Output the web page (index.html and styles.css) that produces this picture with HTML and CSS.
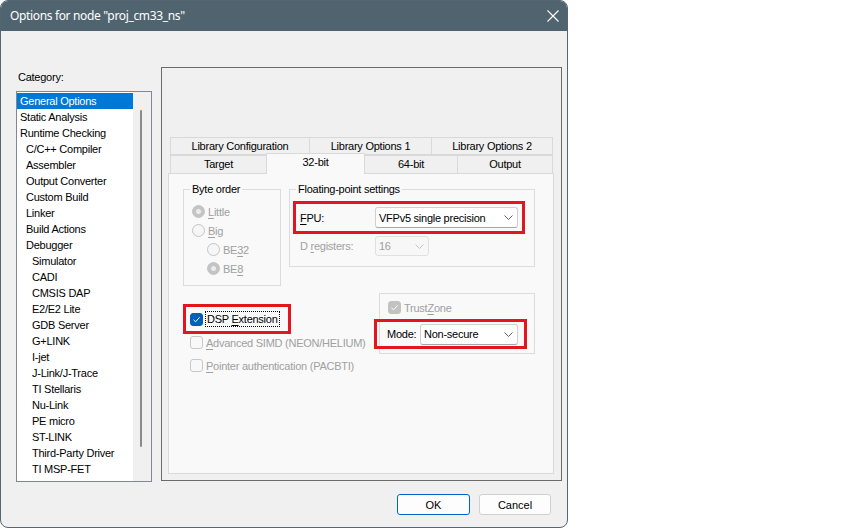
FILE: index.html
```html
<!DOCTYPE html>
<html>
<head>
<meta charset="utf-8">
<link rel="stylesheet" href="styles.css">
</head>
<body>
<div class="dialog">
  <div class="titlebar">
    <span class="title">Options for node "proj_cm33_ns"</span>
    <svg class="close" width="12" height="12" viewBox="0 0 12 12"><path d="M0.5 0.5 L11.5 11.5 M11.5 0.5 L0.5 11.5" stroke="#ffffff" stroke-width="1.1" fill="none"/></svg>
  </div>
  <div class="main">
    <div class="left">
      <div class="cat-label">Category:</div>
      <div class="list">
        <div class="items">
          <div class="item sel">General Options</div>
          <div class="item">Static Analysis</div>
          <div class="item">Runtime Checking</div>
          <div class="item l1">C/C++ Compiler</div>
          <div class="item l1">Assembler</div>
          <div class="item l1">Output Converter</div>
          <div class="item l1">Custom Build</div>
          <div class="item l1">Linker</div>
          <div class="item l1">Build Actions</div>
          <div class="item l1">Debugger</div>
          <div class="item l2">Simulator</div>
          <div class="item l2">CADI</div>
          <div class="item l2">CMSIS DAP</div>
          <div class="item l2">E2/E2 Lite</div>
          <div class="item l2">GDB Server</div>
          <div class="item l2">G+LINK</div>
          <div class="item l2">I-jet</div>
          <div class="item l2">J-Link/J-Trace</div>
          <div class="item l2">TI Stellaris</div>
          <div class="item l2">Nu-Link</div>
          <div class="item l2">PE micro</div>
          <div class="item l2">ST-LINK</div>
          <div class="item l2">Third-Party Driver</div>
          <div class="item l2">TI MSP-FET</div>
        </div>
        <div class="vscroll"><div class="thumb"></div></div>
      </div>
    </div>
    <div class="frame">
      <div class="tabs">
        <div class="tabrow upper">
          <div class="tab w1">Library Configuration</div>
          <div class="tab w2">Library Options 1</div>
          <div class="tab w3">Library Options 2</div>
        </div>
        <div class="tabrow lower">
          <div class="tab w4">Target</div>
          <div class="tab w5 active">32-bit</div>
          <div class="tab w6">64-bit</div>
          <div class="tab w7">Output</div>
        </div>
        <div class="panel">
          <div class="grid">
            <fieldset class="grp byte">
              <legend>Byte order</legend>
              <div class="radios">
                <div class="rrow dis"><span class="radio on"></span><span><u>L</u>ittle</span></div>
                <div class="rrow dis"><span class="radio"></span><span><u>B</u>ig</span></div>
                <div class="rrow dis sub"><span class="radio"></span><span>BE<u>3</u>2</span></div>
                <div class="rrow dis sub"><span class="radio on"></span><span>BE<u>8</u></span></div>
              </div>
            </fieldset>
            <fieldset class="grp fp">
              <legend>Floating-point settings</legend>
              <div class="redbox fpu">
                <span class="flabel"><u>F</u>PU:</span>
                <div class="select fpusel"><span>VFPv5 single precision</span><svg class="chev" width="9" height="5" viewBox="0 0 9 5"><path d="M0.5 0.5 L4.5 4.5 L8.5 0.5" stroke="#606060" fill="none"/></svg></div>
              </div>
              <div class="drow">
                <span class="flabel dis">D <u>r</u>egisters:</span>
                <div class="select dsel disabled"><span>16</span><svg class="chev" width="9" height="5" viewBox="0 0 9 5"><path d="M0.5 0.5 L4.5 4.5 L8.5 0.5" stroke="#c4c4c4" fill="none"/></svg></div>
              </div>
            </fieldset>
            <div class="checks">
              <div class="redbox dsp">
                <span class="cbox checked"><svg width="13" height="13" viewBox="0 0 13 13"><path d="M3.5 6.8 L5.6 8.8 L9.6 4.3" stroke="#ffffff" stroke-width="1" fill="none"/></svg></span>
                <span class="focus">DSP <u>E</u>xtension</span>
              </div>
              <div class="crow adv dis"><span class="cbox"></span><span><u>A</u>dvanced SIMD (NEON/HELIUM)</span></div>
              <div class="crow ptr dis"><span class="cbox"></span><span><u>P</u>ointer authentication (PACBTI)</span></div>
            </div>
            <div class="grp tz">
              <div class="crow dis"><span class="cbox dchecked"><svg width="13" height="13" viewBox="0 0 13 13"><path d="M3.5 6.8 L5.6 8.8 L9.6 4.3" stroke="#ffffff" stroke-width="1" fill="none"/></svg></span><span>Trust<u>Z</u>one</span></div>
              <div class="redbox mode">
                <span class="mlabel">Mode:</span>
                <div class="select modesel"><span>Non-secure</span><svg class="chev" width="9" height="5" viewBox="0 0 9 5"><path d="M0.5 0.5 L4.5 4.5 L8.5 0.5" stroke="#606060" fill="none"/></svg></div>
              </div>
            </div>
          </div>
        </div>
      </div>
    </div>
  </div>
  <div class="footer">
    <button class="btn ok">OK</button>
    <button class="btn">Cancel</button>
  </div>
</div>
</body>
</html>
```

FILE: styles.css
```css
* { box-sizing: border-box; }
html, body { margin: 0; padding: 0; background: #ffffff; }
body {
  font-family: "Liberation Sans", Arial, sans-serif;
  font-size: 11px;
  letter-spacing: -0.25px;
  color: #000;
}
u { text-decoration: underline; text-underline-offset: 2px; }

.dialog {
  width: 568px;
  height: 528px;
  border: 1px solid #56656f;
  border-radius: 8px;
  overflow: hidden;
  background: #f0f0f0;
  display: flex;
  flex-direction: column;
}
.titlebar {
  height: 30px;
  flex: none;
  background: #50646f;
  color: #fff;
  display: flex;
  align-items: center;
  justify-content: space-between;
  padding: 0 8px 0 9px;
}
.title {
  font-family: "Noto Sans", "Liberation Sans", sans-serif;
  font-size: 12px;
  letter-spacing: -0.35px;
  padding-bottom: 1px;
}
.close { display: block; margin-bottom: 0; }

.main {
  display: flex;
  align-items: flex-start;
  padding-left: 15px;
  flex: none;
}
.left { width: 136px; padding-top: 40px; }
.cat-label { height: 13px; line-height: 13px; margin-bottom: 7px; padding-left: 2px; }
.list {
  height: 391px;
  border: 1px solid #828790;
  background: #fff;
  display: flex;
}
.items { width: 116px; padding-top: 1px; }
.item {
  height: 16px;
  line-height: 16px;
  padding-left: 3px;
  white-space: nowrap;
  color: #000;
}
.item.l1 { padding-left: 9px; }
.item.l2 { padding-left: 15px; }
.item.sel { background: #0078d7; color: #fff; }
.vscroll { width: 18px; background: #f0f0f0; padding-top: 18px; }
.thumb {
  width: 2px;
  height: 337px;
  margin-left: 7px;
  background: #8a8a8a;
  border-radius: 1px;
}

.frame {
  margin-left: 9px;
  margin-top: 36px;
  width: 401px;
  height: 414px;
  border: 1px solid #6a6a6a;
  background: #f0f0f0;
  padding: 69px 0 0 6px;
}
.tabs { width: 386px; }
.tabrow { display: flex; margin-left: 2px; height: 18px; }
.tab {
  height: 18px;
  line-height: 17px;
  border: 1px solid #d9d9d9;
  border-bottom: none;
  text-align: center;
  background: #f0f0f0;
  white-space: nowrap;
  margin-left: -1px;
}
.tab.w1 { width: 140px; margin-left: 0; }
.tab.w2 { width: 123px; }
.tab.w3 { width: 122px; }
.tab.w4 { width: 97px; margin-left: 0; }
.tab.w5 { width: 99px; }
.tab.w6 { width: 94px; }
.tab.w7 { width: 96px; }
.tabrow.upper .tab { border-bottom: 1px solid #d9d9d9; }
.tabrow.lower { align-items: flex-end; }
.tab.active {
  position: relative;
  z-index: 1;
  height: 21px;
  margin-top: -2px;
  margin-bottom: -1px;
  background: #f9f9f9;
  line-height: 16px;
  align-self: flex-start;
}
.panel {
  width: 386px;
  height: 301px;
  background: #f9f9f9;
  border: 1px solid #d9d9d9;
  padding: 9px 0 0 14px;
}
.grid {
  display: grid;
  grid-template-columns: 98px 246px;
  column-gap: 8px;
  align-items: start;
}
fieldset.grp {
  margin: 0;
  padding: 0;
  border: 1px solid #dcdcdc;
  min-width: 0;
}
legend {
  margin-left: 6px;
  padding: 0 2px;
  line-height: 13px;
  height: 13px;
}
.byte { height: 103px; }
.fp { height: 84px; }

.radios { padding: 6px 0 0 8px; }
.rrow { height: 19px; display: flex; align-items: center; white-space: nowrap; }
.rrow.sub { margin-left: 15px; }
.dis { color: #a0a0a0; }
.radio {
  width: 13px;
  height: 13px;
  border-radius: 50%;
  border: 1px solid #c4c4c4;
  background: #f6f6f6;
  margin-right: 3px;
  display: flex;
  align-items: center;
  justify-content: center;
  flex: none;
}
.radio.on { background: #c4c4c4; }
.radio.on::after {
  content: "";
  width: 5px;
  height: 5px;
  border-radius: 50%;
  background: #ececec;
}

.redbox { border: 3px solid #e3151f; display: flex; align-items: center; }
.fpu { margin: 5px 0 0 3px; width: 232px; height: 33px; padding-left: 4px; }
.flabel { width: 75px; flex: none; }
.select {
  height: 21px;
  background: #fff;
  border: 1px solid #d0d0d0;
  border-bottom-color: #a8a8a8;
  border-radius: 3px;
  display: flex;
  align-items: center;
  justify-content: space-between;
  padding: 0 4px 0 3px;
  white-space: nowrap;
}
.select.disabled { background: #f7f7f7; border-color: #e0e0e0; color: #a0a0a0; height: 20px; }
.fpusel { width: 143px; }
.dsel { width: 54px; padding-left: 3px; }
.drow { display: flex; align-items: center; margin-top: 2px; padding-left: 10px; }
.chev { display: block; flex: none; }

.checks { padding-top: 18px; white-space: nowrap; }
.dsp { width: 108px; height: 30px; padding-left: 4px; }
.cbox {
  width: 13px;
  height: 13px;
  border: 1px solid #c8c8c8;
  background: #f8f8f8;
  border-radius: 3px;
  margin-right: 3px;
  flex: none;
  display: block;
}
.cbox svg { display: block; margin: -1px; }
.cbox.checked { background: #005fb8; border-color: #005fb8; }
.cbox.dchecked { background: #c2c2c2; border-color: #c2c2c2; }
.focus { outline: 1px dotted #000; outline-offset: 0; padding: 0 1px; line-height: 14px; }
.crow { display: flex; align-items: center; height: 15px; }
.crow.adv { margin-top: 1px; padding-left: 7px; }
.crow.ptr { margin-top: 8px; padding-left: 7px; }

.tz {
  margin: 7px 0 0 90px;
  width: 156px;
  height: 61px;
  border: 1px solid #dcdcdc;
  padding: 7px 0 0 8px;
}
.tz .crow { height: 13px; }
.mode { margin: 5px 0 0 -14px; width: 153px; height: 30px; padding-left: 10px; }
.mlabel { width: 33px; flex: none; }
.modesel { width: 98px; }

.footer {
  display: flex;
  justify-content: flex-end;
  padding-right: 16px;
  margin-top: 12px;
  gap: 9px;
}
.btn {
  font-family: "Liberation Sans", Arial, sans-serif;
  font-size: 11px;
  letter-spacing: 0;
  height: 21px;
  width: 72px;
  background: #fdfdfd;
  border: 1px solid #d0d0d0;
  border-radius: 3px;
  color: #000;
  padding: 0;
}
.btn.ok { width: 73px; border-color: #0067c0; }
```
